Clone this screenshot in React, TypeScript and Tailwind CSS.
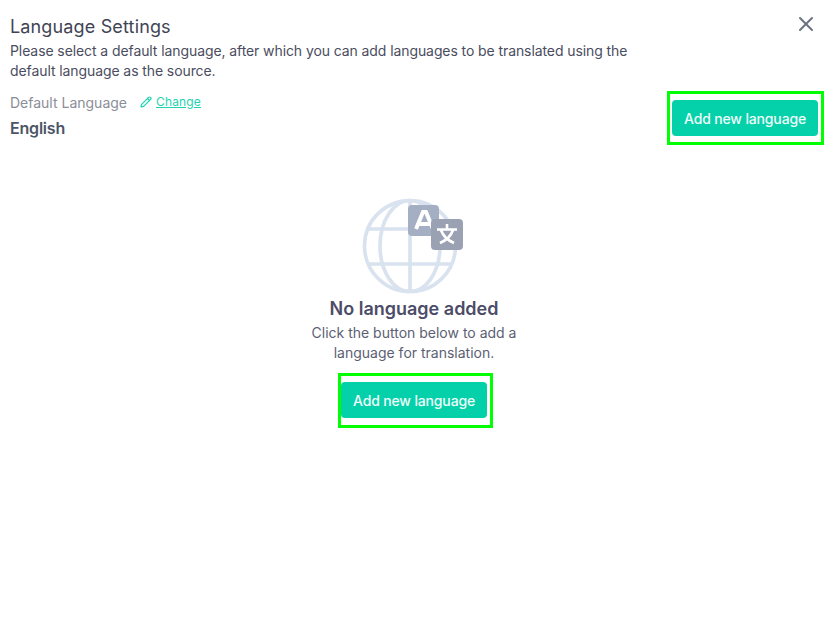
import { Pencil, X } from "lucide-react"

function AddButton() {
  return (
    <button className="block w-[146px] h-9 rounded bg-[#04d1aa] text-[#f0fdfa] text-[14px] font-medium tracking-[-0.15px]">
      Add new language
    </button>
  )
}

function GlobeIcon() {
  return (
    <svg width="104" height="96" viewBox="0 0 104 96" fill="none">
      <g stroke="#d9e2ef" strokeWidth="3.6">
        <circle cx="48" cy="48" r="45.5" />
        <ellipse cx="48" cy="48" rx="30" ry="45.5" />
        <path d="M48 3v90M6 31h84M6 66h84" />
      </g>
      <rect x="46" y="7" width="31" height="31" rx="4" fill="#a5afc3" />
      <path d="M54 31l7-17h3l7 17M57 26h11" stroke="#fff" strokeWidth="4" />
      <rect x="69" y="21" width="32" height="31" rx="4" fill="#99a1b3" />
      <path d="M85 26v5M75 31.500h20M79 32c2 6 6 10 13 13M91 32c-2 6-6 10-13 13" stroke="#fff" strokeWidth="2.6" />
    </svg>
  )
}

export default function App() {
  return (
    <div className="relative w-[828px] h-[639px] bg-white overflow-hidden font-['Inter',sans-serif]">
      <button aria-label="Close" className="absolute top-[12px] right-[10px]">
        <X size={24} strokeWidth={2} color="#6b7280" />
      </button>
      <header className="flex justify-between pl-[10px] pr-[4px] pt-[16px]">
        <div className="w-[640px]">
          <h1 className="text-[18px] leading-[22px] text-[#3f4454] tracking-[0.15px]">Language Settings</h1>
          <p className="mt-[3px] w-[630px] text-[14px] leading-[20px] text-[#4a4d60] tracking-[-0.09px]">
            Please select a default language, after which you can add languages to be translated using the default language as the source.
          </p>
          <div className="mt-[11px] flex items-center h-[20px]">
            <span className="w-[130px] text-[14px] text-[#8b8e99] tracking-[0px]">Default Language</span>
            <Pencil size={12} strokeWidth={2.4} color="#1fd3b0" />
            <a className="ml-[4px] text-[12px] text-[#1fd3b0] underline tracking-[0.15px]">Change</a>
          </div>
          <p className="mt-[6px] text-[16px] leading-[20px] font-semibold text-[#4d5566] tracking-[-0.2px]">English</p>
        </div>
        <div className="pt-[75px] self-start">
          <div className="border-[3px] border-[#00ff00] pl-[2px] pr-[3px] pt-[6px] pb-[6px]">
            <AddButton />
          </div>
        </div>
      </header>
      <main className="mt-[53px] flex flex-col items-center">
        <GlobeIcon />
        <h2 className="mt-[3px] text-[18px] leading-[24px] font-semibold text-[#4c4c68] tracking-[0px]">No language added</h2>
        <p className="mt-[2px] w-[230px] text-center text-[14px] leading-[20px] text-[#5c5f73] tracking-[0px]">
          Click the button below to add a language for translation.
        </p>
        <div className="mt-[10px] ml-[3px] border-[3px] border-[#00ff00] pl-0 pr-[3px] pt-[6px] pb-[7px]">
          <AddButton />
        </div>
      </main>
    </div>
  )
}
